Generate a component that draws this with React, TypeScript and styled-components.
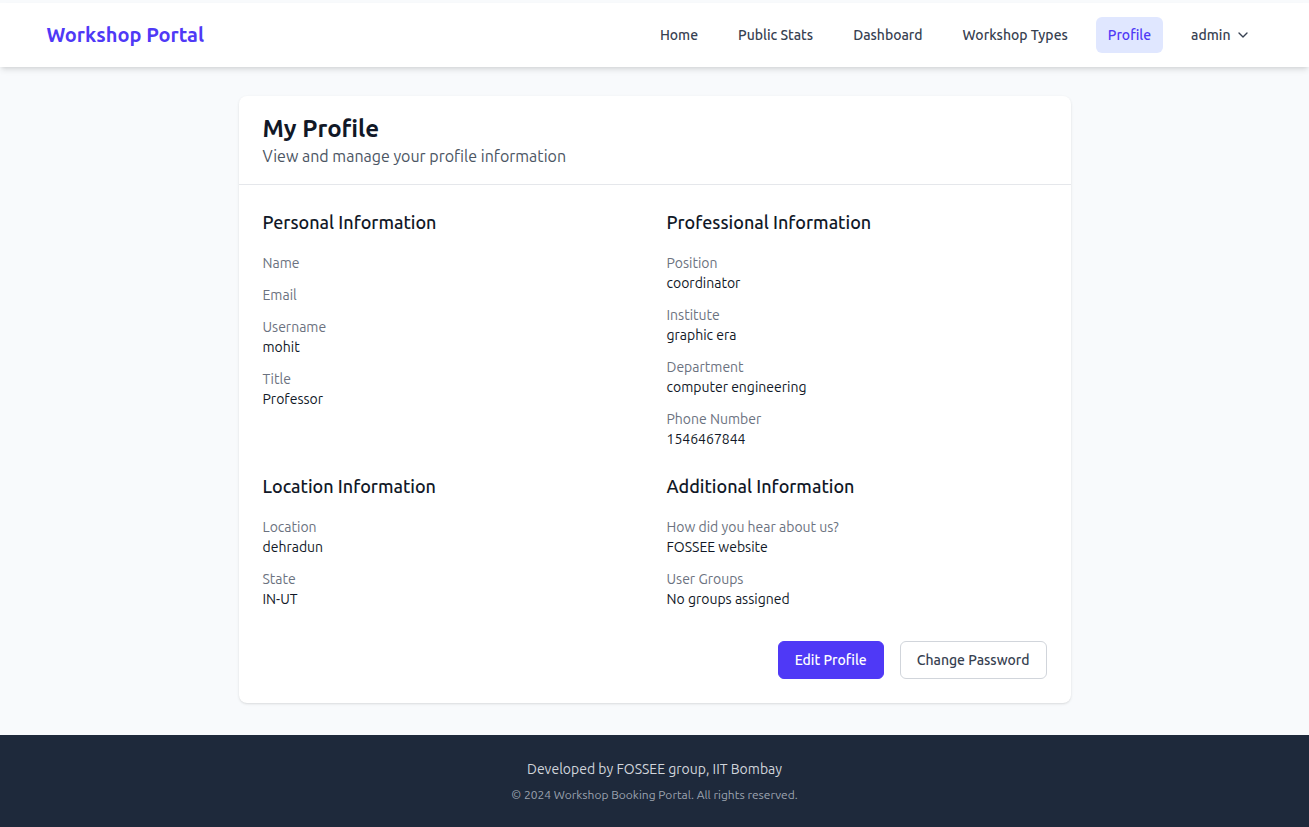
import React from "react";
import styled, { createGlobalStyle } from "styled-components";
import { ChevronDown } from "lucide-react";

const GlobalStyle = createGlobalStyle`
  * { box-sizing: border-box; }
  html, body { margin: 0; padding: 0; }
  body {
    font-family: "Ubuntu", "Noto Sans", "Liberation Sans", sans-serif;
    background: #f8fafc;
    color: #111827;
    -webkit-font-smoothing: antialiased;
  }
`;

const Page = styled.div`
  min-height: 827px;
  display: flex;
  flex-direction: column;
  padding-top: 3px;
  background: #f8fafc;
`;

const NavBar = styled.header`
  background: #ffffff;
  box-shadow: 0 4px 6px -1px rgba(0, 0, 0, 0.1), 0 2px 4px -2px rgba(0, 0, 0, 0.1);
  position: relative;
  z-index: 1;
`;

const NavInner = styled.div`
  max-width: 1280px;
  margin: 0 auto;
  padding: 0 32px;
  height: 64px;
  display: flex;
  align-items: center;
  justify-content: space-between;
`;

const Logo = styled.a`
  font-size: 20px;
  line-height: 28px;
  font-weight: 700;
  color: #4f39f6;
  text-decoration: none;
`;

const NavLinks = styled.nav`
  display: flex;
  align-items: center;
  gap: 16px;
`;

const NavLink = styled.a<{ $active?: boolean }>`
  display: flex;
  align-items: center;
  gap: 4px;
  height: 36px;
  padding: 0 12px;
  border-radius: 6px;
  font-size: 14px;
  line-height: 20px;
  font-weight: 500;
  color: ${(p) => (p.$active ? "#4f39f6" : "#374151")};
  background: ${(p) => (p.$active ? "#e0e7ff" : "transparent")};
  text-decoration: none;
  cursor: pointer;
`;

const Main = styled.main`
  flex: 1;
  padding: 29px 16px 32px;
  display: flex;
  justify-content: center;
`;

const Card = styled.section`
  width: 832px;
  background: #ffffff;
  border-radius: 8px;
  box-shadow: 0 1px 3px 0 rgba(0, 0, 0, 0.1), 0 1px 2px -1px rgba(0, 0, 0, 0.1);
`;

const CardHeader = styled.div`
  padding: 17px 24px 16px;
  border-bottom: 1px solid #e5e7eb;
`;

const Title = styled.h1`
  margin: 0;
  font-size: 24px;
  line-height: 31px;
  font-weight: 700;
  color: #111827;
`;

const Subtitle = styled.p`
  margin: 0;
  font-size: 16px;
  line-height: 24px;
  color: #4b5563;
`;

const CardBody = styled.div`
  padding: 23px 24px 24px;
`;

const Grid = styled.div`
  display: grid;
  grid-template-columns: 1fr 1fr;
  column-gap: 24px;
  row-gap: 23px;
`;

const Section = styled.div`
  display: flex;
  flex-direction: column;
`;

const SectionTitle = styled.h2`
  margin: 0 0 17px;
  font-size: 18px;
  line-height: 28px;
  font-weight: 500;
  color: #111827;
`;

const Fields = styled.dl`
  margin: 0;
  display: flex;
  flex-direction: column;
  gap: 12px;
`;

const Field = styled.div``;

const Label = styled.dt`
  font-size: 14px;
  line-height: 20px;
  color: #6b7280;
`;

const Value = styled.dd`
  margin: 0;
  font-size: 14px;
  line-height: 20px;
  color: #111827;
`;

const Actions = styled.div`
  margin-top: 32px;
  display: flex;
  justify-content: flex-end;
  gap: 16px;
`;

const Button = styled.button<{ $primary?: boolean }>`
  font-family: inherit;
  font-size: 14px;
  line-height: 20px;
  font-weight: 500;
  padding: 8px 16px;
  border-radius: 6px;
  cursor: pointer;
  border: 1px solid ${(p) => (p.$primary ? "#4f39f6" : "#d1d5db")};
  background: ${(p) => (p.$primary ? "#4f39f6" : "#ffffff")};
  color: ${(p) => (p.$primary ? "#ffffff" : "#374151")};
`;

const Footer = styled.footer`
  background: #1e293b;
  padding: 24px 16px;
  text-align: center;
`;

const FooterMain = styled.p`
  margin: 0;
  font-size: 14px;
  line-height: 20px;
  color: #d1d5db;
`;

const FooterSmall = styled.p`
  margin: 8px 0 0;
  font-size: 12px;
  line-height: 16px;
  color: #9ca3af;
`;

type Item = { label: string; value?: string };
type Group = { title: string; items: Item[] };

const groups: Group[] = [
  {
    title: "Personal Information",
    items: [
      { label: "Name" },
      { label: "Email" },
      { label: "Username", value: "mohit" },
      { label: "Title", value: "Professor" },
    ],
  },
  {
    title: "Professional Information",
    items: [
      { label: "Position", value: "coordinator" },
      { label: "Institute", value: "graphic era" },
      { label: "Department", value: "computer engineering" },
      { label: "Phone Number", value: "1546467844" },
    ],
  },
  {
    title: "Location Information",
    items: [
      { label: "Location", value: "dehradun" },
      { label: "State", value: "IN-UT" },
    ],
  },
  {
    title: "Additional Information",
    items: [
      { label: "How did you hear about us?", value: "FOSSEE website" },
      { label: "User Groups", value: "No groups assigned" },
    ],
  },
];

export default function App() {
  return (
    <Page>
      <GlobalStyle />
      <NavBar>
        <NavInner>
          <Logo>Workshop Portal</Logo>
          <NavLinks>
            <NavLink>Home</NavLink>
            <NavLink>Public Stats</NavLink>
            <NavLink>Dashboard</NavLink>
            <NavLink>Workshop Types</NavLink>
            <NavLink $active>Profile</NavLink>
            <NavLink>
              admin
              <ChevronDown size={16} strokeWidth={2} />
            </NavLink>
          </NavLinks>
        </NavInner>
      </NavBar>
      <Main>
        <Card>
          <CardHeader>
            <Title>My Profile</Title>
            <Subtitle>View and manage your profile information</Subtitle>
          </CardHeader>
          <CardBody>
            <Grid>
              {groups.map((g) => (
                <Section key={g.title}>
                  <SectionTitle>{g.title}</SectionTitle>
                  <Fields>
                    {g.items.map((it) => (
                      <Field key={it.label}>
                        <Label>{it.label}</Label>
                        {it.value && <Value>{it.value}</Value>}
                      </Field>
                    ))}
                  </Fields>
                </Section>
              ))}
            </Grid>
            <Actions>
              <Button $primary>Edit Profile</Button>
              <Button>Change Password</Button>
            </Actions>
          </CardBody>
        </Card>
      </Main>
      <Footer>
        <FooterMain>Developed by FOSSEE group, IIT Bombay</FooterMain>
        <FooterSmall>© 2024 Workshop Booking Portal. All rights reserved.</FooterSmall>
      </Footer>
    </Page>
  );
}
